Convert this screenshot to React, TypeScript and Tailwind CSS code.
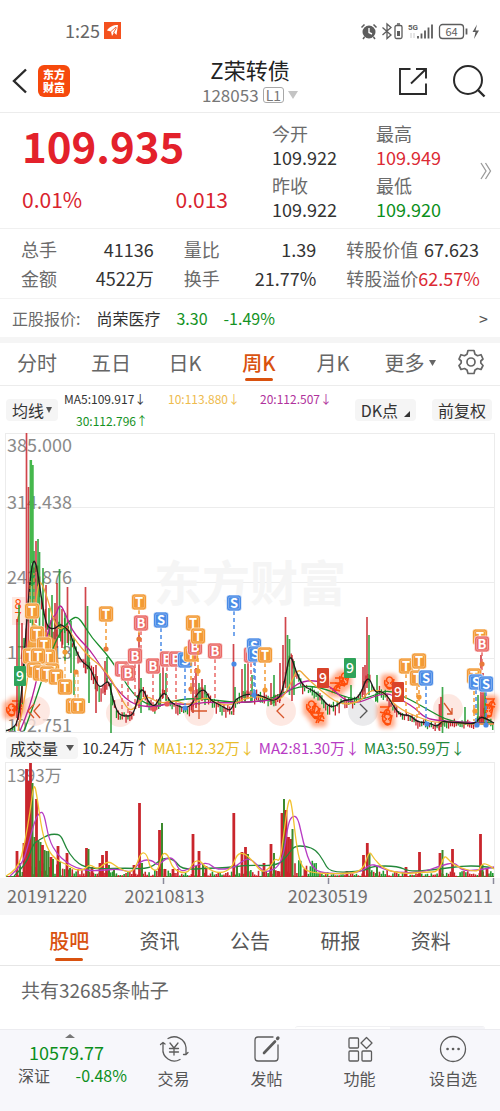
import type { ReactNode } from "react";

type Pt = [number, number];

const RED = "#c9252c";
const GREEN = "#1f9a2e";

/* ---------- chart data (x, y in chart units) ---------- */

const ma5: Pt[] = [[6, 298], [14, 295], [18, 287], [22, 257], [26, 197], [30, 147], [33, 127], [36, 130], [39, 148], [44, 182], [48, 195], [55, 196], [60, 191], [65, 194], [70, 199], [74, 212], [78, 222], [83, 230], [90, 234], [95, 247], [100, 255], [105, 250], [109, 248], [113, 267], [118, 281], [125, 283], [132, 283], [136, 273], [140, 257], [144, 257], [148, 269], [155, 274], [160, 264], [165, 259], [170, 269], [178, 273], [185, 275], [192, 272], [198, 259], [205, 256], [210, 267], [218, 271], [225, 275], [231, 278], [235, 267], [240, 264], [247, 261], [258, 262], [265, 264], [272, 268], [280, 265], [285, 247], [290, 219], [296, 239], [303, 253], [312, 257], [320, 263], [328, 273], [335, 274], [343, 267], [352, 267], [360, 263], [368, 241], [375, 260], [380, 258], [387, 262], [394, 274], [400, 282], [410, 282], [417, 289], [430, 290], [437, 294], [442, 288], [447, 289], [463, 290], [475, 291], [480, 284], [485, 285], [494, 290]];
const ma10: Pt[] = [[18, 298], [25, 267], [32, 207], [38, 149], [42, 150], [48, 167], [54, 189], [60, 197], [66, 192], [75, 207], [90, 225], [100, 232], [112, 247], [122, 267], [130, 279], [138, 271], [146, 262], [160, 271], [175, 267], [190, 273], [205, 263], [215, 270], [230, 273], [245, 265], [260, 263], [280, 269], [290, 252], [298, 235], [305, 243], [320, 257], [340, 272], [360, 269], [370, 257], [382, 258], [392, 269], [402, 277], [415, 283], [435, 290], [445, 288], [465, 291], [494, 291]];
const ma20: Pt[] = [[20, 298], [30, 275], [40, 232], [48, 199], [52, 184], [56, 182], [60, 170], [66, 182], [72, 197], [80, 207], [90, 217], [100, 232], [110, 247], [120, 260], [130, 269], [140, 273], [155, 274], [170, 270], [190, 272], [205, 269], [225, 270], [250, 269], [275, 267], [290, 257], [300, 249], [315, 247], [330, 253], [345, 268], [358, 270], [370, 265], [385, 260], [395, 263], [405, 269], [415, 275], [425, 285], [440, 288], [460, 289], [494, 291]];
const ma30: Pt[] = [[24, 298], [32, 277], [42, 247], [50, 222], [60, 199], [72, 185], [78, 184], [84, 192], [92, 205], [105, 219], [118, 237], [130, 257], [142, 269], [158, 274], [175, 267], [200, 265], [235, 270], [265, 268], [285, 259], [300, 253], [320, 254], [345, 264], [360, 267], [375, 262], [388, 257], [405, 264], [420, 272], [432, 279], [445, 286], [460, 290], [494, 290]];

// x, top, bottom, up
const spikes: [number, number, number, number][] = [
  [17, 186, 285, 1], [19, 172, 280, 0], [22, 190, 270, 1], [24, 205, 250, 0], [26.5, 0, 240, 1], [28.5, 54, 220, 1], [30.5, 27, 190, 0], [32.5, 32, 200, 0], [34, 118, 180, 0], [36, 108, 190, 1], [38, 106, 185, 0], [39.5, 119, 205, 0], [43, 135, 215, 0], [46, 152, 225, 1], [49, 175, 230, 0], [52, 162, 225, 0], [55, 170, 230, 1], [57, 150, 215, 1], [59.5, 136, 205, 0], [62, 176, 215, 1], [65, 180, 228, 0], [67.5, 154, 210, 1], [71, 188, 240, 0], [74, 205, 262, 0], [85.5, 154, 240, 1], [87.5, 173, 236, 0], [89, 222, 270, 0], [96, 232, 280, 1], [105, 228, 262, 1], [107, 224, 250, 0], [111, 250, 312, 0], [139, 200, 275, 1], [141, 245, 280, 0], [160, 240, 274, 0], [163, 222, 265, 1], [166, 240, 268, 0], [193, 245, 280, 1], [196, 235, 275, 1], [199, 250, 272, 0], [202, 246, 268, 1], [205, 252, 272, 0], [233.5, 211, 282, 1], [235, 254, 270, 0], [242, 236, 270, 1], [245, 231, 268, 0], [248, 226, 266, 1], [252, 242, 268, 0], [271, 250, 272, 1], [274, 242, 270, 0], [280, 230, 268, 1], [283, 212, 260, 1], [285.5, 184, 255, 1], [287.5, 202, 258, 0], [289.5, 206, 262, 0], [292, 222, 268, 1], [294, 228, 262, 0], [363, 234, 262, 1], [365, 232, 265, 1], [367, 184, 255, 1], [369, 202, 262, 0], [377, 242, 268, 0], [351, 252, 270, 0], [439.5, 271, 298, 1], [442.5, 254, 300, 0], [441, 264, 294, 1], [465, 274, 292, 0], [481, 222, 290, 1], [483, 240, 292, 1], [485, 255, 290, 0], [478, 262, 292, 0],
];

const volumeSpikes: [number, number, number][] = [
  [17, 26, 1], [20, 14, 0], [24, 34, 1], [26.5, 108, 1], [28.5, 96, 1], [30.5, 114, 1], [32.5, 94, 0], [34.5, 40, 0], [36.5, 78, 1], [38.5, 36, 0], [40.5, 35, 0], [42.5, 32, 1], [44.5, 27, 0], [46.5, 26, 0], [48.5, 26, 0], [51, 20, 1], [53, 18, 0], [58, 31, 1], [60, 15, 0], [67, 24, 1], [70, 9, 0], [86.5, 29, 1], [88.5, 28, 0], [92, 10, 1], [100, 14, 1], [102.5, 22, 1], [106.5, 26, 1], [109, 12, 0], [114, 8, 0], [134, 12, 1], [139.5, 74, 1], [142, 14, 0], [159.5, 47, 1], [162, 54, 0], [165, 8, 1], [173, 8, 1], [193, 43, 1], [196, 11, 0], [199, 26, 1], [203, 13, 0], [206, 11, 1], [233.8, 64, 1], [237, 12, 0], [242, 25, 1], [245.5, 30, 1], [248, 23, 0], [264, 14, 1], [271, 33, 1], [274, 24, 0], [278, 6, 1], [282, 64, 1], [284, 78, 0], [286, 67, 1], [288.5, 40, 1], [291, 38, 1], [292.5, 48, 0], [305, 8, 1], [347, 6, 1], [363.5, 22, 1], [367.3, 34, 1], [369.5, 24, 0], [377, 10, 0], [406, 10, 1], [419.5, 25, 1], [440, 24, 1], [442.5, 27, 0], [452.5, 28, 1], [480.5, 43, 1], [482.5, 12, 0], [487, 8, 1],
];
const vol1: Pt[] = [[6, 114], [18, 108], [25, 80], [30, 50], [34, 20], [37, 34], [42, 70], [48, 88], [56, 98], [66, 102], [75, 108], [84, 108], [90, 102], [98, 108], [108, 98], [118, 106], [130, 111], [136, 105], [141, 90], [147, 92], [150, 106], [158, 110], [162, 91], [168, 92], [173, 108], [188, 112], [193, 100], [200, 98], [206, 106], [220, 112], [232, 106], [237, 92], [244, 91], [252, 98], [262, 111], [270, 106], [275, 96], [280, 100], [284, 70], [289, 34], [292, 44], [297, 88], [302, 106], [312, 111], [340, 112], [363, 110], [369, 88], [374, 97], [384, 107], [402, 112], [425, 110], [439, 110], [444, 93], [449, 98], [455, 104], [478, 111], [482, 101], [489, 103], [494, 107]];
const vol2: Pt[] = [[10, 114], [22, 104], [29, 80], [35, 58], [40, 50], [44, 51], [49, 78], [57, 92], [66, 100], [76, 106], [90, 109], [105, 108], [120, 107], [132, 111], [141, 98], [152, 98], [158, 104], [166, 96], [174, 96], [180, 111], [194, 104], [208, 100], [216, 108], [234, 106], [242, 99], [250, 96], [260, 106], [266, 111], [282, 103], [288, 62], [292, 54], [298, 55], [303, 80], [312, 108], [330, 112], [360, 111], [370, 102], [378, 104], [390, 110], [420, 111], [440, 104], [455, 100], [462, 109], [480, 108], [494, 105]];
const vol3: Pt[] = [[14, 114], [26, 103], [33, 82], [39, 78], [48, 73], [54, 72], [61, 73], [66, 86], [74, 98], [84, 105], [100, 107], [125, 106], [150, 107], [162, 96], [174, 97], [182, 108], [210, 106], [226, 106], [246, 103], [278, 104], [288, 93], [294, 84], [306, 84], [316, 88], [323, 98], [330, 111], [365, 109], [372, 104], [398, 104], [410, 110], [440, 107], [462, 104], [480, 104], [494, 106]];

function at(points: Pt[], x: number): number {
  for (let i = 1; i < points.length; i++) {
    const [x0, y0] = points[i - 1];
    const [x1, y1] = points[i];
    if (x <= x1) return y0 + ((y1 - y0) * (x - x0)) / (x1 - x0);
  }
  return points[points.length - 1][1];
}

function noise(i: number): number {
  const v = Math.sin(i * 127.1 + 11.7) * 43758.5453;
  return v - Math.floor(v);
}

function smooth(points: Pt[]): string {
  let d = `M${points[0][0]} ${points[0][1]}`;
  for (let i = 1; i < points.length - 1; i++) {
    const [x, y] = points[i];
    const [nx, ny] = points[i + 1];
    d += `Q${x} ${y} ${(x + nx) / 2} ${(y + ny) / 2}`;
  }
  const last = points[points.length - 1];
  return `${d}L${last[0]} ${last[1]}`;
}

const candles = Array.from({ length: 254 }, (_, i) => {
  const x = 7 + i * 1.92;
  const spread = x < 20 ? 2 : x < 75 ? 14 : x < 110 ? 10 : x > 400 ? 4 : 6;
  const mid = at(ma5, x) + (noise(i) - 0.4) * spread;
  const size = 2 + noise(i + 500) * spread;
  return { x, top: mid - size / 2, bottom: Math.min(298, mid + size), up: noise(i + 900) > 0.5 };
});

const volumes = Array.from({ length: 254 }, (_, i) => {
  const x = 7 + i * 1.92;
  const base = Math.min(16, Math.max(1, (114 - at(vol3, x)) * 0.6));
  return { x, h: x < 16 ? 1 : 1 + noise(i + 40) * base, up: noise(i + 900) > 0.5 };
});

/* ---------- chart marks ---------- */

type Mark = { x: number; y: number; k: "T" | "B" | "S"; to?: number };

const marks: Mark[] = [
  { x: 32, y: 178, k: "T" }, { x: 37, y: 201, k: "T" }, { x: 44, y: 212, k: "T" }, { x: 30, y: 223, k: "T" }, { x: 48, y: 224, k: "T" }, { x: 38, y: 223, k: "T" },
  { x: 34, y: 237, k: "T" }, { x: 52, y: 238, k: "T" }, { x: 40, y: 240, k: "T" }, { x: 47, y: 241, k: "T" }, { x: 56, y: 244, k: "T" },
  { x: 65, y: 254, k: "T" }, { x: 73, y: 273, k: "T" }, { x: 78, y: 273, k: "T" },
  { x: 106, y: 181, k: "T", to: 216 }, { x: 139, y: 169, k: "T", to: 210 }, { x: 141, y: 190, k: "B", to: 216 },
  { x: 161, y: 187, k: "S", to: 218 }, { x: 122, y: 236, k: "B", to: 280 }, { x: 128, y: 240, k: "B", to: 282 }, { x: 135, y: 223, k: "B", to: 270 },
  { x: 153, y: 233, k: "B", to: 272 }, { x: 167, y: 226, k: "B", to: 268 }, { x: 176, y: 226, k: "B", to: 272 }, { x: 185, y: 227, k: "S", to: 272 },
  { x: 191, y: 221, k: "T", to: 262 }, { x: 193, y: 190, k: "T" }, { x: 195, y: 214, k: "B", to: 272 }, { x: 198, y: 203, k: "T", to: 244 },
  { x: 215, y: 218, k: "B", to: 266 }, { x: 234, y: 170, k: "S", to: 206 }, { x: 251, y: 222, k: "B", to: 262 }, { x: 254, y: 213, k: "S", to: 262 }, { x: 255, y: 221, k: "S", to: 266 }, { x: 265, y: 222, k: "T", to: 258 },
  { x: 406, y: 233, k: "T", to: 280 }, { x: 417, y: 245, k: "T", to: 286 }, { x: 419, y: 228, k: "T", to: 282 }, { x: 426, y: 245, k: "S", to: 290 },
  { x: 480, y: 204, k: "T" }, { x: 482, y: 211, k: "B", to: 262 }, { x: 474, y: 243, k: "T", to: 288 }, { x: 476, y: 249, k: "S", to: 290 }, { x: 486, y: 251, k: "S", to: 290 },
];
const markColor = { T: "#f39a35", B: "#ea6a67", S: "#4a8be6" };

const nines: { x: number; y: number; c: string }[] = [
  { x: 20, y: 243, c: "#2fa35a" },
  { x: 323, y: 245, c: "#d8432a" },
  { x: 350, y: 235, c: "#2fa35a" },
  { x: 398, y: 259, c: "#d8432a" },
];
const blobs: Pt[] = [[11, 277], [17, 273], [315, 279], [319, 285], [311, 274], [340, 250], [344, 246], [335, 255], [389, 250], [385, 279], [387, 286], [490, 271], [488, 278]];
const dots: { x: number; y: number; c: string }[] = [
  { x: 106, y: 216, c: "#e8783a" }, { x: 65, y: 219, c: "#f39a35" }, { x: 76, y: 239, c: "#f08a3a" }, { x: 139, y: 206, c: "#e8783a" },
  { x: 154, y: 276, c: "#ea5a57" }, { x: 167, y: 271, c: "#ea5a57" }, { x: 185, y: 275, c: "#4a8be6" }, { x: 191, y: 256, c: "#e8783a" }, { x: 198, y: 238, c: "#f39a35" },
  { x: 234, y: 231, c: "#4a8be6" }, { x: 254, y: 262, c: "#4a8be6" }, { x: 265, y: 257, c: "#f39a35" }, { x: 419, y: 264, c: "#f39a35" }, { x: 427, y: 291, c: "#4a8be6" },
  { x: 477, y: 292, c: "#4a8be6" }, { x: 486, y: 292, c: "#4a8be6" }, { x: 482, y: 231, c: "#e8783a" }, { x: 475, y: 278, c: "#f39a35" },
];

function PriceChart() {
  return (
    <svg viewBox="0 0 500 301" className="block h-auto w-full overflow-visible" role="img" aria-label="周K">
      <defs>
        <filter id="soft" x="-50%" y="-50%" width="200%" height="200%">
          <feGaussianBlur stdDeviation="2" />
        </filter>
      </defs>
      <g stroke="#ececec" strokeWidth="1" fill="none">
        <rect x="5.5" y="0.5" width="489" height="299" />
        <path d="M5 74.500H494M5 149.500H494M5 225.500H494" />
      </g>
      <text x="250" y="168" textAnchor="middle" fontSize="48" fontWeight="700" fill="#f5f5f5">东方财富</text>
      <g fill="#8a8a8a" fontSize="18">
        <text x="7" y="19">385.000</text>
        <text x="7" y="76">314.438</text>
        <text x="7" y="151">243.876</text>
        <text x="7" y="226">173.313</text>
        <text x="7" y="299">102.751</text>
      </g>
      <g fill="#fde3dc" opacity="0.8">
        <circle cx="35" cy="278" r="15" />
        <circle cx="120" cy="280" r="14" />
        <circle cx="199" cy="278" r="15" />
        <circle cx="281" cy="278" r="15" />
        <circle cx="448" cy="276" r="15" />
        <circle cx="363" cy="278" r="15" fill="#e6e6e8" />
        <rect x="12" y="164" width="13" height="28" />
      </g>
      <g filter="url(#soft)" fill="#ff8a5c" opacity="0.7">
        {blobs.map(([x, y]) => (
          <rect key={`${x}-${y}`} x={x - 8} y={y - 9} width="16" height="18" rx="4" />
        ))}
      </g>
      <g fill="#ff4d0a" fontSize="13" textAnchor="middle">
        <text x="18" y="176">8</text>
        <text x="18" y="189">7</text>
      </g>
      <g fill="none" stroke="#ff4d0a" strokeWidth="1.500">
        {blobs.map(([x, y], i) => (
          <path
            key={`${x}-${y}`}
            d={
              i % 2
                ? `M${x - 5} ${y - 5}H${x + 4}L${x - 1} ${y + 5}M${x - 5} ${y}L${x + 5} ${y + 3}M${x - 3} ${y + 5}Q${x + 2} ${y - 8} ${x + 5} ${y + 1}`
                : `M${x} ${y}A3 3 0 1 1 ${x + 1} ${y}A3 3 0 1 1 ${x} ${y}M${x - 4} ${y - 3}Q${x - 6} ${y + 5} ${x + 3} ${y + 5}L${x + 5} ${y - 4}`
            }
          />
        ))}
      </g>
      <g strokeWidth="1.300">
        {candles.map((c) => (
          <path key={c.x} d={`M${c.x} ${c.top}V${c.bottom}`} stroke={c.up ? RED : GREEN} />
        ))}
        {spikes.map(([x, t, b, up]) => (
          <path key={x} d={`M${x} ${t}V${Math.min(b, 300)}`} stroke={up ? RED : GREEN} strokeWidth="1.700" opacity="0.85" />
        ))}
      </g>
      <path d="M31 27V130M32.500 32V130" stroke="#45b84c" strokeWidth="2.200" fill="none" />
      <path d="M27 214L33 190L40 194L56 208L60 240L46 250L28 240Z" fill="#f39a35" opacity="0.9" />
      <g fill="none" strokeWidth="1.300" strokeLinejoin="round">
        <path d={smooth(ma30)} stroke="#1a8f2c" />
        <path d={smooth(ma20)} stroke="#b8219a" />
        <path d={smooth(ma10)} stroke="#f0a93c" />
        <path d={smooth(ma5)} stroke="#1c1c1c" />
      </g>
      <path d="M65 245V219M75 265V240M78 265V240M30 170V148M34 170V140" stroke="#f39a35" strokeDasharray="4 3" fill="none" />
      {marks.map((m, i) => (
        <g key={i}>
          {m.to && <path d={`M${m.x} ${m.y + 8}V${m.to}`} stroke={markColor[m.k]} strokeWidth="1.500" strokeDasharray="4 3" />}
          <rect x={m.x - 7.5} y={m.y - 8} width="15" height="16" rx="3" fill={markColor[m.k]} stroke="#ffffff" strokeWidth="0.600" />
          <rect x={m.x - 5.5} y={m.y - 6} width="11" height="12" rx="1.500" fill="none" stroke="#ffffff" strokeOpacity="0.350" strokeWidth="0.800" />
          <text x={m.x} y={m.y + 5} textAnchor="middle" fontSize="13" fontWeight="700" fill="#ffffff">{m.k}</text>
        </g>
      ))}
      {dots.map((d) => (
        <circle key={`${d.x}-${d.y}`} cx={d.x} cy={d.y} r="2.600" fill={d.c} />
      ))}
      {nines.map((n) => (
        <g key={n.x}>
          <rect x={n.x - 6} y={n.y - 10} width="12" height="20" rx="1" fill={n.c} />
          <text x={n.x} y={n.y + 5} textAnchor="middle" fontSize="14" fontWeight="500" fill="#ffffff">9</text>
        </g>
      ))}
      <g fill="none" stroke="#d8552b" strokeWidth="1.300">
        <path d="M34 271L28 278L34 285M40 271L34 278L40 285" />
        <path d="M191 278H207M199 270V286" />
        <path d="M284 271L277 278L284 285" />
        <path d="M360 271L367 278L360 285" stroke="#555555" />
        <path d="M444 270L452 281M447 281H452V275" />
      </g>
    </svg>
  );
}

function VolumeChart() {
  return (
    <svg viewBox="0 0 500 116" className="block h-auto w-full overflow-visible" role="img" aria-label="成交量">
      <rect x="5.500" y="0.500" width="489" height="114" fill="none" stroke="#ececec" />
      <text x="7" y="20" fontSize="17" fill="#8a8a8a">1393万</text>
      <path d="M6 114.500H494" stroke={RED} />
      {volumes.map((v) => (
        <path key={v.x} d={`M${v.x} 115V${115 - v.h}`} stroke={v.up ? RED : GREEN} strokeWidth="1.600" />
      ))}
      {volumeSpikes.map(([x, h, up]) => (
        <path key={x} d={`M${x} 115V${115 - h}`} stroke={up ? RED : "#3c8a2e"} strokeWidth={up ? 2.8 : 2} />
      ))}
      <g fill="none" strokeWidth="1.300" strokeLinejoin="round">
        <path d={smooth(vol3)} stroke="#23883a" />
        <path d={smooth(vol2)} stroke="#b83cc4" />
        <path d={smooth(vol1)} stroke="#f2c230" />
      </g>
    </svg>
  );
}

/* ---------- icons ---------- */

function StatusIcons() {
  return (
    <svg viewBox="0 0 120 20" className="h-5 w-[120px]" fill="none" stroke="#5c5c5c" aria-hidden="true">
      <circle cx="9" cy="10" r="6.500" fill="#5c5c5c" stroke="none" />
      <path d="M1.500 5.500L4.500 2.500M16.500 5.500L13.500 2.500M4.500 15L3 17M13.500 15L15 17" strokeWidth="1.500" />
      <path d="M9 6V10.500L12 12" stroke="#ffffff" strokeWidth="1.400" />
      <path d="M22.500 5.500L31 13L27 16.500V2L31 5.500L22.500 13" strokeWidth="1.300" />
      <rect x="35" y="3.500" width="7" height="13" rx="1.500" strokeWidth="1.300" />
      <path d="M37 2H40" strokeWidth="1.500" />
      <rect x="37" y="9" width="3" height="5" fill="#5c5c5c" stroke="none" />
      <text x="48" y="8" fontSize="8" fontWeight="700" fill="#5c5c5c" stroke="none" fontFamily="Roboto, sans-serif">5G</text>
      <path d="M51 11V16M54 11V16" stroke="#cccccc" />
      <path d="M58 14V16.500M61.500 11.500V16.500M65 8.500V16.500M68.500 5.500V16.500M72 2.500V16.500" strokeWidth="1.800" />
      <rect x="79.500" y="2.500" width="24" height="14" rx="3" strokeWidth="1.300" />
      <path d="M106.500 6.500V12.500" strokeWidth="1.800" />
      <text x="91.500" y="13.500" textAnchor="middle" fontSize="11" fill="#5c5c5c" stroke="none">64</text>
      <path d="M117 2.500L112.500 10H115.500L114 17L119 8.500H115.500Z" fill="#5c5c5c" stroke="none" />
    </svg>
  );
}

function Triangle({ className }: { className: string }) {
  return (
    <svg viewBox="0 0 10 8" className={className} fill="currentColor" preserveAspectRatio="none" aria-hidden="true">
      <path d="M0 0H10L5 8Z" />
    </svg>
  );
}

function NavIcon({ children }: { children: ReactNode }) {
  return (
    <svg viewBox="0 0 30 30" className="h-[30px] w-[30px]" fill="none" stroke="#5c5c5c" strokeWidth="1.300" strokeLinecap="round" strokeLinejoin="round" aria-hidden="true">
      {children}
    </svg>
  );
}

/* ---------- page ---------- */

const stats = [
  [["总手", "41136"], ["金额", "4522万"]],
  [["量比", "1.39"], ["换手", "21.77%"]],
  [["转股价值", "67.623"], ["转股溢价", "62.57%"]],
];

const navItems: { label: string; icon: ReactNode }[] = [
  {
    label: "交易",
    icon: (
      <>
        <path d="M4 9V14A11.500 11.500 0 0 0 21 25.500M1.500 10.500L4 8.500L6 10M9 4.500A12 12 0 0 1 27 13.500V20M24.500 20.500L27 20.500L29 18.500" />
        <path d="M11 9L15 14L19 9M15 14V21M10.500 14.500H19.500M10.500 18H19.500" />
      </>
    ),
  },
  {
    label: "发帖",
    icon: (
      <>
        <path d="M21 3H6A3 3 0 0 0 3 6V24A3 3 0 0 0 6 27H23A3 3 0 0 0 26 24V11" />
        <path d="M12 19L23 7.500" strokeWidth="2.600" />
        <path d="M25.500 4.500L26 4" strokeWidth="3.200" />
      </>
    ),
  },
  {
    label: "功能",
    icon: (
      <>
        <rect x="4" y="4" width="9.500" height="10" rx="1" />
        <rect x="4" y="17" width="9.500" height="10" rx="1" />
        <rect x="17" y="17" width="9.500" height="10" rx="1" />
        <path d="M21.500 3.500L27 9L21.500 14.500L16 9Z" />
      </>
    ),
  },
  {
    label: "设自选",
    icon: (
      <>
        <circle cx="15" cy="15" r="12.500" />
        <path d="M9.500 15H9.600M15 15H15.100M20.500 15H20.600" strokeWidth="2.600" />
      </>
    ),
  },
];

function Quote({ label, value, tone }: { label: string; value: string; tone: string }) {
  return (
    <div>
      <dt className="text-lg leading-6 text-[#6b6b6b]">{label}</dt>
      <dd className={`text-lg leading-6 ${tone}`}>{value}</dd>
    </div>
  );
}

export default function App() {
  return (
    <div className="min-h-screen bg-white font-['Noto_Sans_CJK_SC',sans-serif] text-[#333333]">
      <div className="flex h-[50px] items-end justify-between pr-5 pb-2 pl-[65px]">
        <div className="flex items-center gap-1">
          <span className="text-lg leading-6 text-[#666666]">1:25</span>
          <svg viewBox="0 0 17 17" className="h-[17px] w-[17px]" aria-hidden="true">
            <rect width="17" height="17" fill="#f4511e" />
            <path d="M3 8.500C5 5 9 3 14 3L12.500 13L10 10.500L8 14L7 9.500Z" fill="#ffffff" />
            <path d="M7 9.500L12 5M9.500 11L12.500 5.500" stroke="#f4511e" strokeWidth="0.900" />
          </svg>
        </div>
        <StatusIcons />
      </div>

      <header className="grid h-[63px] grid-cols-[1fr_auto_1fr] items-center border-b border-[#ececec] px-3">
        <div className="flex items-center gap-2.5">
          <button type="button" aria-label="返回">
            <svg viewBox="0 0 16 26" className="h-[26px] w-4" fill="none" stroke="#2a2a2a" strokeWidth="2.400" aria-hidden="true">
              <path d="M14 1.500L2 13L14 24.500" />
            </svg>
          </button>
          <a href="#home" className="grid h-8 w-8 place-items-center rounded-md bg-[#f6490c] text-center text-[11px] leading-[13px] font-black text-white">
            <span>东方<br />财富</span>
          </a>
        </div>
        <div className="flex flex-col items-center">
          <h1 className="text-[22px] leading-7 font-normal text-[#222222]">Z荣转债</h1>
          <div className="flex items-center gap-1 text-[#777777]">
            <span className="text-[17px] leading-6">128053</span>
            <span className="rounded-[3px] border border-[#a8a8a8] px-0.5 text-sm leading-[14px]">L1</span>
            <Triangle className="h-2 w-2.5 text-[#c4c4c4]" />
          </div>
        </div>
        <div className="flex items-center justify-end gap-6 pr-0.5">
          <button type="button" aria-label="分享">
            <svg viewBox="0 0 30 30" className="h-[30px] w-[30px]" fill="none" stroke="#2a2a2a" strokeWidth="1.900" aria-hidden="true">
              <path d="M12.500 3H2V28H28V17.500M18 3H28V12.500M28 3L13 17.500" />
            </svg>
          </button>
          <button type="button" aria-label="搜索">
            <svg viewBox="0 0 34 34" className="h-[34px] w-[34px]" fill="none" stroke="#2a2a2a" strokeWidth="2" aria-hidden="true">
              <circle cx="16" cy="16" r="14" />
              <path d="M25.500 25.500L32.500 32.500" strokeWidth="2.400" />
            </svg>
          </button>
        </div>
      </header>

      <section className="flex h-[116px] items-center border-b border-[#f0f0f0] pl-[22px]">
        <div className="flex flex-[250] flex-col pb-3">
          <strong className="text-[42px] leading-[60px] font-bold text-[#e3212b]">109.935</strong>
          <div className="flex justify-between pt-2 pr-11 text-[21px] leading-8 text-[#d9232e]">
            <span>0.01%</span>
            <span>0.013</span>
          </div>
        </div>
        <dl className="grid flex-[208] grid-cols-2 gap-y-1">
          <Quote label="今开" value="109.922" tone="text-[#333333]" />
          <Quote label="最高" value="109.949" tone="text-[#dc2a34]" />
          <Quote label="昨收" value="109.922" tone="text-[#333333]" />
          <Quote label="最低" value="109.920" tone="text-[#0c8f1c]" />
        </dl>
        <button type="button" aria-label="展开" className="mr-2 shrink-0">
          <svg viewBox="0 0 12 18" className="h-[18px] w-3" fill="none" stroke="#9a9a9a" strokeWidth="1.300" aria-hidden="true">
            <path d="M1 1L6 9L1 17M5.500 1L10.500 9L5.500 17" />
          </svg>
        </button>
      </section>

      <section className="grid h-[70px] grid-cols-3 content-center gap-x-[30px] border-b border-[#f3f3f3] px-[21px]">
        {stats.map((column, i) => (
          <dl key={i}>
            {column.map(([label, value]) => (
              <div key={label} className="flex items-center justify-between text-lg leading-[29px] whitespace-nowrap">
                <dt className="text-[#6b6b6b]">{label}</dt>
                <dd className={value === "62.57%" ? "text-[#dc2a34]" : "text-[#333333]"}>{value}</dd>
              </div>
            ))}
          </dl>
        ))}
      </section>

      <a href="#stock" className="flex h-[44px] items-center border-b-[6px] border-[#f5f5f5] px-3 text-base leading-6">
        <span className="text-[#6b6b6b]">正股报价:</span>
        <span className="ml-4">尚荣医疗</span>
        <span className="ml-4 text-[#149224]">3.30</span>
        <span className="ml-4 text-[#149224]">-1.49%</span>
        <span className="ml-auto text-[#555555]">&gt;</span>
      </a>

      <nav className="grid h-[43px] grid-cols-[74fr_74fr_74fr_74fr_74fr_80fr_50fr] border-b border-[#ececec] text-xl leading-7 text-[#666666]">
        {["分时", "五日", "日K", "周K", "月K"].map((t) => (
          <button
            key={t}
            type="button"
            className={`relative flex items-center justify-center pb-0.5 ${t === "周K" ? "font-medium text-[#d9520f]" : ""}`}
          >
            {t}
            {t === "周K" && <span className="absolute bottom-1 h-[3px] w-7 rounded-full bg-[#d9520f]" />}
          </button>
        ))}
        <button type="button" className="flex items-center justify-center gap-1 pb-0.5">
          更多
          <Triangle className="h-1.5 w-[7px]" />
        </button>
        <button type="button" aria-label="设置" className="flex items-center pb-1 pl-2">
          <svg viewBox="0 0 26 26" className="h-[26px] w-[26px]" fill="none" stroke="#666666" strokeWidth="1.700" strokeLinejoin="round" aria-hidden="true">
            <path d="M10 1.500H16L17 5.300L19.500 6.700L23 5.700L25 10L22.800 12V14L25 16.500L23 20.500L19.500 19.500L17 21L16 24.500H10L9 21L6.500 19.500L3 20.500L1 16.500L3.200 14V12L1 10L3 5.700L6.500 6.700L9 5.300Z" />
            <circle cx="13" cy="13" r="4" />
          </svg>
        </button>
      </nav>

      <div className="flex h-[47px] items-center pr-2 pl-1.5">
        <label className="flex h-[22px] shrink-0 items-center rounded-sm bg-[#f5f5f5] px-1.5 text-base">
          <select aria-label="均线" className="w-[34px] appearance-none bg-transparent text-base leading-[22px]">
            <option>均线</option>
          </select>
          <Triangle className="h-1.5 w-1.5 text-[#555555]" />
        </label>
        <div className="grid grid-cols-[104px_92px_80px] pl-1.5 text-xs leading-[22px] whitespace-nowrap">
          <span>MA5:109.917↓</span>
          <span className="text-[#eebb4d]">10:113.880↓</span>
          <span className="text-[#b0329c]">20:112.507↓</span>
          <span className="pl-3 text-[#149224]">30:112.796↑</span>
        </div>
        <div className="ml-auto flex shrink-0 gap-4 text-base leading-[22px]">
          <button type="button" className="flex items-center gap-1.5 rounded-sm bg-[#f5f5f5] px-1.5">
            DK点
            <svg viewBox="0 0 6 6" className="mt-2 h-1.5 w-1.5" aria-hidden="true"><path d="M6 0V6H0Z" fill="#333333" /></svg>
          </button>
          <button type="button" className="rounded-sm bg-[#f5f5f5] px-1.5">前复权</button>
        </div>
      </div>

      <PriceChart />

      <div className="flex h-7 items-center gap-1 pl-1.5 text-[15px] whitespace-nowrap">
        <label className="flex h-[22px] items-center gap-1.5 rounded-sm bg-[#f5f5f5] px-1 text-base">
          <select aria-label="成交量" className="w-[50px] appearance-none bg-transparent text-base leading-[22px]">
            <option>成交量</option>
          </select>
          <Triangle className="h-1.5 w-2 text-[#555555]" />
        </label>
        <span>10.24万↑</span>
        <span className="text-[#e9bd2c]">MA1:12.32万↓</span>
        <span className="text-[#b83cc4]">MA2:81.30万↓</span>
        <span className="text-[#23883a]">MA3:50.59万↓</span>
      </div>

      <VolumeChart />

      <div className="bg-[#f6f6f7] pb-2">
        <svg viewBox="0 0 500 6" className="block h-auto w-full" aria-hidden="true">
          <path d="M163.500 0V6M328.500 0V6M493.500 0V6" stroke="#8a8a9a" strokeWidth="1.500" />
        </svg>
        <div className="grid grid-cols-[118fr_164fr_206fr] px-[7px] text-lg leading-[23px] text-[#707070]">
          <span>20191220</span>
          <span>20210813</span>
          <span className="flex justify-between"><span>20230519</span><span>20250211</span></span>
        </div>
      </div>

      <nav className="grid h-[51px] grid-cols-5 border-b border-[#e6e6e6] px-6 text-xl leading-7 text-[#555555]">
        {["股吧", "资讯", "公告", "研报", "资料"].map((t, i) => (
          <button
            key={t}
            type="button"
            className={`relative flex items-center justify-center pt-0.5 ${i === 0 ? "font-medium text-[#d9520f]" : ""}`}
          >
            {t}
            {i === 0 && <span className="absolute bottom-1 h-[3px] w-7 rounded-full bg-[#d9520f]" />}
          </button>
        ))}
      </nav>

      <p className="flex h-[60px] items-center px-[21px] pb-3 text-[19px] leading-6 text-[#666666]">共有32685条帖子</p>
      <div className="mr-[3%] ml-[59%] flex h-[3px] overflow-hidden rounded-t-md border-t border-[#f0f0f2]">
        <span className="flex-1" />
        <span className="flex-1 bg-[#f4f4f8]" />
      </div>

      <nav className="grid h-[83px] grid-cols-[127fr_93fr_93fr_93fr_94fr] border-t border-[#ececf0] bg-[#f7f7fb] text-base leading-6 text-[#555555]">
        <button type="button" className="flex flex-col items-center pt-1 pl-3">
          <Triangle className="h-1 w-2.5 rotate-180 text-[#777777]" />
          <span className="mt-0.5 pr-1.5 text-lg leading-6 text-[#0c8f1c]">10579.77</span>
          <span className="flex w-full justify-between pl-1.5 leading-[22px]">
            <span>深证</span>
            <span className="text-[#0c8f1c]">-0.48%</span>
          </span>
        </button>
        {navItems.map((item) => (
          <button key={item.label} type="button" className="flex flex-col items-center pt-1">
            <NavIcon>{item.icon}</NavIcon>
            <span className="mt-0.5">{item.label}</span>
          </button>
        ))}
      </nav>
    </div>
  );
}
